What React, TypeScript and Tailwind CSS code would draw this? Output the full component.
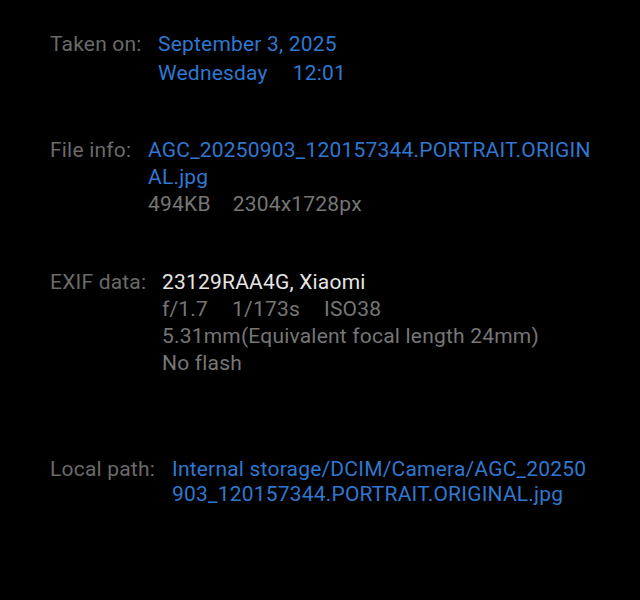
const label = "shrink-0 text-[#6a6a6a]";
const blue = "text-[#3077d0]";
const muted = "text-[#767676]";

export default function App() {
  return (
    <div className="min-h-[600px] w-[640px] bg-black pl-[50px] pt-[30px] font-['Roboto',sans-serif] text-[21px] tracking-[0.2px] whitespace-nowrap">
      <div className="flex leading-[29px]">
        <div className={`${label} w-[108px]`}>Taken on:</div>
        <div className={blue}>
          <div>September 3, 2025</div>
          <div className="flex gap-[25px]">
            <span>Wednesday</span>
            <span>12:01</span>
          </div>
        </div>
      </div>

      <div className="mt-[49px] flex leading-[27px]">
        <div className={`${label} w-[98px]`}>File info:</div>
        <div>
          <div className={blue}>
            AGC_20250903_120157344.PORTRAIT.ORIGIN
            <br />
            AL.jpg
          </div>
          <div className={`flex gap-[22px] ${muted}`}>
            <span>494KB</span>
            <span>2304x1728px</span>
          </div>
        </div>
      </div>

      <div className="mt-[51px] flex leading-[27px]">
        <div className={`${label} w-[112px]`}>EXIF data:</div>
        <div>
          <div className="text-[#e6e6e6]">23129RAA4G, Xiaomi</div>
          <div className={`flex gap-[24px] ${muted}`}>
            <span>f/1.7</span>
            <span>1/173s</span>
            <span>ISO38</span>
          </div>
          <div className={muted}>5.31mm(Equivalent focal length 24mm)</div>
          <div className={muted}>No flash</div>
        </div>
      </div>

      <div className="mt-[80px] flex leading-[25px]">
        <div className={`${label} w-[122px]`}>Local path:</div>
        <div className={blue}>
          Internal storage/DCIM/Camera/AGC_20250
          <br />
          903_120157344.PORTRAIT.ORIGINAL.jpg
        </div>
      </div>
    </div>
  );
}
